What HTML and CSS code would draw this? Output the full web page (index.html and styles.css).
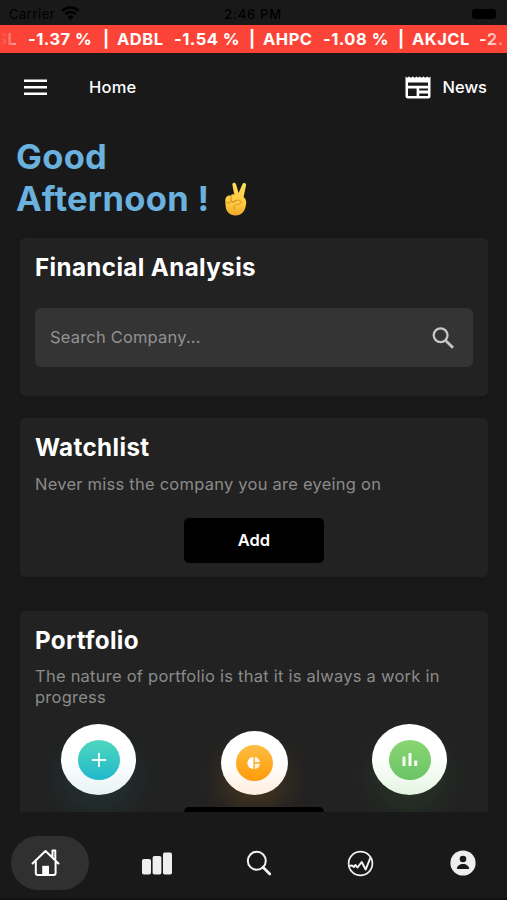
FILE: index.html
```html
<!DOCTYPE html>
<html lang="en">
<head>
<meta charset="utf-8">
<title>Home</title>
<link rel="stylesheet" href="styles.css">
</head>
<body>
<div class="app">
  <div class="status">
    <div class="carrier"><span>Carrier</span>
      <svg width="19" height="14" viewBox="0 0 19 14"><path d="M9.500 14l3-3.300a4.300 4.300 0 0 0-6 0z"/><path d="M4.300 8.200a7.400 7.400 0 0 1 10.400 0M1.200 4.900a11.800 11.800 0 0 1 16.600 0" fill="none" stroke="#000" stroke-width="2.500"/></svg>
    </div>
    <div class="clock">2:46 PM</div>
    <div class="battery"></div>
  </div>
  <div class="ticker">
    <span class="name fade-left">SL</span><span class="change">-1.37 %</span><span class="bar">|</span>
    <span class="name">ADBL</span><span class="change">-1.54 %</span><span class="bar">|</span>
    <span class="name">AHPC</span><span class="change">-1.08 %</span><span class="bar">|</span>
    <span class="name">AKJCL</span><span class="change fade-right">-2.</span>
  </div>
  <header class="header">
    <svg class="menu" width="23" height="17" viewBox="0 0 23 17"><path d="M0 1.800h23M0 8.300h23M0 14.800h23" stroke="#fff" stroke-width="2.400"/></svg>
    <span class="title">Home</span>
    <svg class="news-icon" width="26" height="23" viewBox="0 0 26 23"><path fill="#fff" fill-rule="evenodd" d="M.5.500l1.600 1.300L4 .5l1.900 1.300L7.800.500l1.900 1.300L11.600.500l1.400 1.300L14.700.500l1.800 1.300L18.400.500l1.800 1.300L22.100.500l1.700 1.300L25.500.500v20q0 2-2.200 2H2.700q-2.200 0-2.200-2zM3 6.400v3.300h20V6.400zM3 12.400v7.600h8.600v-7.600zM14.200 12.400v2.200H23v-2.200zM14.200 17.500V20H23v-2.500z"/></svg>
    <span class="news">News</span>
  </header>
  <main class="content">
    <h1 class="greeting">Good<br>Afternoon !
      <svg class="hand" width="24" height="34" viewBox="0 0 24 34">
        <defs><linearGradient id="skin" x2="0" y2="1"><stop stop-color="#ffdc5c"/><stop offset=".65" stop-color="#ffca3d"/><stop offset="1" stop-color="#f0a62b"/></linearGradient></defs>
        <path fill="url(#skin)" d="M8.400 3C8 .4 11.300-.1 12.100 2.400L14.600 11 18.300 2.400c1.200-2.500 4.400-1.400 3.700 1.200L19.600 15c2.700 2 3 5 2.300 8-.8 6-4.300 10.500-10.100 10.500C5 33.500 1.700 29 1.600 23.500 1.400 20 .6 17 2.500 15c1.300-1.500 3-1.700 4.300-1.300q1-2 3.500-1.200z"/>
        <path d="M2.300 20c2 2.500 4.500 1 4.800-1.500M7 18.500c1 3 4.300 2 5-.2M7 13.700v4M8 20.500c3-1.500 6-3.500 8.500-1.500 1.500 2.300-.8 3.300-4 3.500-2.500.5-3 2.500-2 4.500" fill="none" stroke="#d98b20" stroke-width="1" stroke-linecap="round"/>
      </svg>
    </h1>
    <section class="card analysis">
      <h2>Financial Analysis</h2>
      <div class="search"><span>Search Company...</span>
        <svg width="23" height="23" viewBox="0 0 23 23" fill="none" stroke="#c6c6c6"><circle cx="8.600" cy="8.300" r="6.900" stroke-width="2.300"/><path d="M13.600 13.400l7.400 7.400" stroke-width="2.800"/></svg>
      </div>
    </section>
    <section class="card watchlist">
      <h2>Watchlist</h2>
      <p>Never miss the company you are eyeing on</p>
      <button>Add</button>
    </section>
    <section class="card portfolio">
      <h2>Portfolio</h2>
      <p>The nature of portfolio is that it is always a work in progress</p>
      <div class="actions">
        <div class="ring teal"><div class="disc"><svg width="16" height="16" viewBox="0 0 16 16"><path d="M8 1v14M.8 8h14.400" stroke="#f2ffff" stroke-width="1.900"/></svg></div></div>
        <div class="ring orange"><div class="disc"><svg width="14" height="14" viewBox="0 0 14 14" fill="#fff"><path d="M6.400 1v12a6 6 0 0 1 0-12z"/><path d="M7.800 1a6 6 0 0 1 5.200 5.300H7.800zM7.800 7.700H13A6 6 0 0 1 7.800 13z" opacity=".85"/></svg></div></div>
        <div class="ring green"><div class="disc"><svg width="16" height="15" viewBox="0 0 16 15"><path d="M2 4.500V14M8 1v13M13.700 8.500V14" stroke="#f5fff2" stroke-width="3"/></svg></div></div>
      </div>
      <div class="next-button"></div>
    </section>
  </main>
  <nav class="nav">
    <div class="tab active"><svg width="30" height="28" viewBox="0 0 30 28"><path d="M1.500 14.500L14.500 2l13 12.500M21.500 7.500V1.500h2.800V10M4.800 12.500V24q0 2 2 2h15.800q2 0 2-2V12.500" fill="none" stroke="#fff" stroke-width="2" stroke-linejoin="round" stroke-linecap="round"/><path d="M11.200 26v-9.200h6.800V26z" fill="#fff"/></svg></div>
    <div class="tab"><svg width="32" height="23" viewBox="0 0 32 23" fill="#eee"><rect x="1" y="7" width="9" height="15.500" rx="1.800"/><rect x="11.600" y="4" width="8.800" height="18.500" rx="1.800"/><rect x="22" y=".5" width="9" height="22" rx="1.800"/></svg></div>
    <div class="tab"><svg width="26" height="26" viewBox="0 0 26 26" fill="none" stroke="#f1f1f1"><circle cx="10.800" cy="10.800" r="9" stroke-width="2"/><path d="M17 17.200l6.800 6.800" stroke-width="2.700" stroke-linecap="round"/></svg></div>
    <div class="tab"><svg width="27" height="27" viewBox="0 0 27 27" fill="none" stroke="#f1f1f1" stroke-linejoin="round"><circle cx="13.500" cy="13.500" r="11.900" stroke-width="1.700"/><path d="M1.800 16l3.200-.5 1.800 1.500L8.500 15l2 2.500 4.200-5.500 4 7.500L23.500 7.500" stroke-width="2"/></svg></div>
    <div class="tab"><svg width="26" height="26" viewBox="0 0 26 26"><circle cx="13" cy="13" r="12.600" fill="#eee"/><circle cx="13" cy="9" r="3.300" fill="#191919"/><path d="M6.800 18.900c.4-3.500 3-5 6.200-5s5.800 1.500 6.200 5z" fill="#191919"/></svg></div>
  </nav>
</div>
</body>
</html>
```

FILE: styles.css
```css
* { box-sizing: border-box; }
body { margin: 0; background: #191919; font-family: Inter, "Liberation Sans", sans-serif; }
h1, h2, p { margin: 0; }
svg { display: block; flex: none; }
.app { width: 507px; height: 900px; display: flex; flex-direction: column; overflow: hidden; color: #fff; background: #191919; }
.status { height: 25px; flex: none; display: grid; grid-template-columns: 1fr auto 1fr; align-items: center; padding: 3px 10px 0 9px; color: #000; font-size: 13px; }
.carrier { display: flex; align-items: center; gap: 6px; letter-spacing: .5px; }
.carrier svg { margin-top: -2px; }
.clock { font-weight: 500; letter-spacing: .75px; }
.battery { justify-self: end; width: 24px; height: 10px; margin-right: 1px; border-radius: 3px; background: #000; }
.ticker { height: 28px; flex: none; display: flex; align-items: center; background: #fb4437; font-weight: 700; font-size: 16.500px; line-height: 28px; letter-spacing: .5px; white-space: nowrap; }
.name { width: 57px; flex: none; }
.name:nth-of-type(7) { width: 60px; }
.name:nth-of-type(10) { width: 67px; }
.change { width: 75px; flex: none; }
.bar { width: 14px; flex: none; }
.fade-left { width: 28px; margin-left: -4px; margin-right: 4px; background: linear-gradient(90deg, #fb4437 15%, #ffd0cc); background-clip: text; color: transparent; }
.fade-right { width: 28px; background: linear-gradient(90deg, #fff 10%, #fb6c60); background-clip: text; color: transparent; }
.header { height: 68px; flex: none; display: flex; align-items: center; padding: 0 20px 0 24px; font-size: 16.500px; font-weight: 500; }
.title { margin-left: 42px; letter-spacing: .2px; }
.news-icon { margin-left: auto; }
.news { margin-left: 12px; }
.content { height: 691px; flex: none; overflow: hidden; padding: 15px 19px 0 20px; }
.greeting { margin-left: -4px; color: #6ab1de; font-size: 34.500px; line-height: 41.500px; font-weight: 700; height: 102px; letter-spacing: .3px; white-space: nowrap; }
.hand { display: inline-block; vertical-align: -5px; margin-left: 6px; }
.card { display: flex; flex-direction: column; background: #222; border-radius: 5px; padding: 14px 15px 0; box-shadow: 0 3px 8px rgba(0,0,0,.1); }
h2 { font-size: 24.200px; line-height: 31px; font-weight: 700; letter-spacing: .38px; }
.card p { color: #8b8b8b; font-size: 16.500px; line-height: 20.500px; letter-spacing: .24px; }
.analysis { height: 158px; margin-bottom: 22px; }
.search { height: 59px; margin-top: 25px; display: flex; align-items: center; justify-content: space-between; padding: 0 18px 1px 15px; border-radius: 6px; background: #343434; color: #929292; font-size: 16.500px; letter-spacing: .18px; }
.search svg { margin-top: 2px; }
.watchlist { height: 159px; margin-bottom: 34px; }
.watchlist p { margin-top: 11px; }
.watchlist button { width: 140px; height: 45px; margin: 23px auto 0; border: 0; border-radius: 5px; background: #000; color: #fff; font: 600 16.500px Inter, sans-serif; }
.portfolio { height: 260px; overflow: hidden; }
.portfolio p { margin-top: 10px; }
.actions { display: flex; justify-content: space-between; align-items: flex-end; padding: 0 26px; margin-top: 17px; }
.ring { width: 75px; height: 71px; border-radius: 50%; display: grid; place-items: center; }
.disc { width: 42px; height: 40px; border-radius: 50%; display: grid; place-items: center; }
.teal { background: linear-gradient(#fff 45%, #e8f3f6); box-shadow: 0 16px 30px rgba(43,190,200,.1); }
.teal .disc { background: linear-gradient(#4ed6bd, #22b8cc); }
.orange { width: 67px; height: 64px; background: linear-gradient(#fff 50%, #ffeedd); box-shadow: 0 16px 28px rgba(255,160,30,.15); }
.orange .disc { width: 37px; height: 36px; background: linear-gradient(#fdbd43, #ff9b08); }
.green { background: linear-gradient(#fff 45%, #e4f5e1); box-shadow: 0 16px 30px rgba(80,200,80,.1); }
.green .disc { background: linear-gradient(#89d571, #6bc467); }
.next-button { width: 140px; height: 45px; flex: none; margin: 12px auto 0; border-radius: 5px; background: #000; }
.nav { height: 88px; flex: none; display: flex; align-items: center; justify-content: space-between; padding: 16px 5px 0 11px; background: #191919; border-bottom: 2px solid #111; }
.tab { width: 78px; height: 54px; display: grid; place-items: center; border-radius: 27px; }
.tab:nth-child(2) { padding-left: 7px; }
.tab:nth-child(3) { padding-left: 4px; }
.tab:nth-child(4) { padding-left: 2px; }
.active { background: #303030; padding-right: 9px; }
```
